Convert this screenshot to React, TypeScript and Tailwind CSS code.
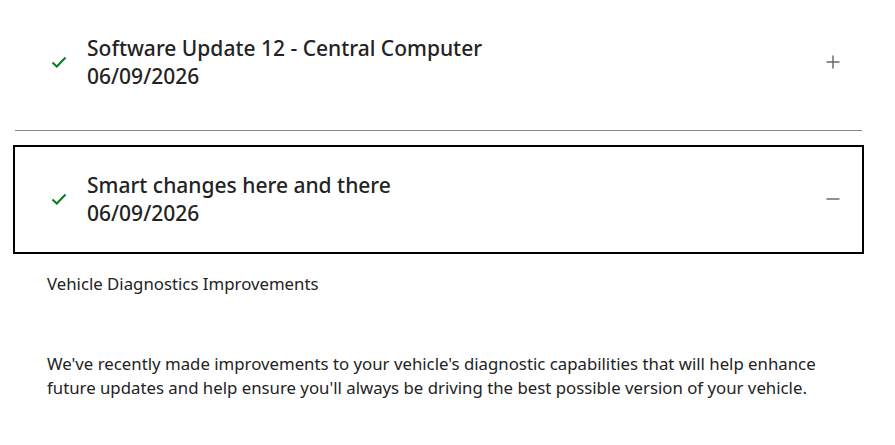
import React from "react";

function Check() {
  return (
    <svg width="18" height="18" viewBox="0 0 18 18" fill="none">
      <path d="M2.5 9.5 L6.8 13.5 L15.5 4.5" stroke="#067d20" strokeWidth="2" />
    </svg>
  );
}

function Plus() {
  return (
    <svg width="16" height="16" viewBox="0 0 16 16" fill="none">
      <path d="M8 1.5 V14.5 M1.5 8 H14.5" stroke="#6b6b6b" strokeWidth="1.5" />
    </svg>
  );
}

function Minus() {
  return (
    <svg width="16" height="16" viewBox="0 0 16 16" fill="none">
      <path d="M1.5 8 H14.5" stroke="#6b6b6b" strokeWidth="1.5" />
    </svg>
  );
}

function Item({ title, open }: { title: string; open: boolean }) {
  return (
    <div
      className={
        "flex items-center border-2 pt-[24px] pb-[25px] pl-[35px] pr-[21px] " +
        (open ? "border-black" : "border-transparent")
      }
    >
      <div className="w-[37px] flex items-center">
        <Check />
      </div>
      <div className="flex-1 text-[21px] leading-[28px] font-medium text-[#232323]">
        <div>{title}</div>
        <div>06/09/2026</div>
      </div>
      {open ? <Minus /> : <Plus />}
    </div>
  );
}

export default function App() {
  return (
    <div
      className="bg-white w-[895px] h-[445px] pl-[13px] pr-[31px] pt-[8px] text-[#232323]"
      style={{ fontFamily: '"Noto Sans", sans-serif' }}
    >
      <Item title="Software Update 12 - Central Computer" open={false} />
      <div className="mx-[2px] mt-[13px] mb-[14px] border-t border-[#8a8a8a]" />
      <Item title="Smart changes here and there" open={true} />
      <div className="px-[34px] text-[16.8px] leading-[24px]">
        <p className="mt-[18px]">Vehicle Diagnostics Improvements</p>
        <p className="mt-[56px]">
          We've recently made improvements to your vehicle's diagnostic capabilities that will help enhance
          <br />
          future updates and help ensure you'll always be driving the best possible version of your vehicle.
        </p>
      </div>
    </div>
  );
}
